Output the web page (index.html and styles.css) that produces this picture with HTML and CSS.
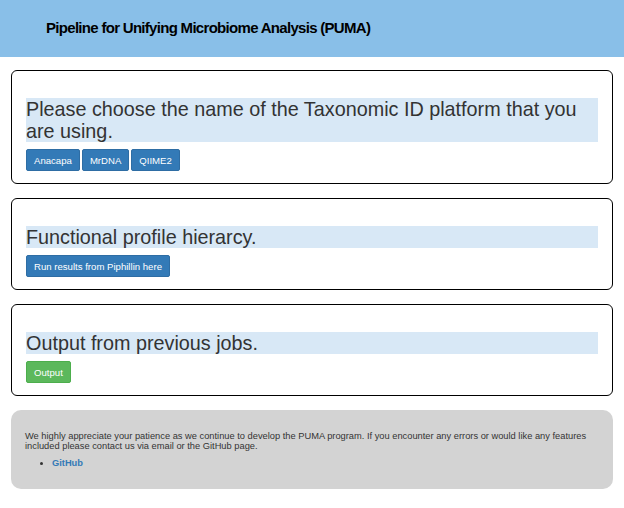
FILE: index.html
```html
<!DOCTYPE html>
<html>
<head>
<meta charset="utf-8">
<link rel="stylesheet" href="styles.css">
</head>
<body>
<header class="topbar">
  <h1 class="title">Pipeline for Unifying Microbiome Analysis (PUMA)</h1>
</header>
<main class="content">
  <section class="card">
    <h3 class="card-heading">Please choose the name of the Taxonomic ID platform that you are using.</h3>
    <div class="btn-row">
      <button class="btn btn-primary">Anacapa</button>
      <button class="btn btn-primary">MrDNA</button>
      <button class="btn btn-primary">QIIME2</button>
    </div>
  </section>
  <section class="card">
    <h3 class="card-heading">Functional profile hierarcy.</h3>
    <div class="btn-row">
      <button class="btn btn-primary">Run results from Piphillin here</button>
    </div>
  </section>
  <section class="card">
    <h3 class="card-heading">Output from previous jobs.</h3>
    <div class="btn-row">
      <button class="btn btn-success">Output</button>
    </div>
  </section>
  <footer class="note">
    <p class="note-text">We highly appreciate your patience as we continue to develop the PUMA program. If you encounter any errors or would like any features included please contact us via email or the GitHub page.</p>
    <ul class="note-links">
      <li><a href="#" class="note-link">GitHub</a></li>
    </ul>
  </footer>
</main>
</body>
</html>
```

FILE: styles.css
```css
* { box-sizing: border-box; }
html, body { margin: 0; padding: 0; background: #fff; }
body { font-family: "Liberation Sans", Arial, sans-serif; color: #333; }

.topbar {
  background: #89bfe8;
  height: 57px;
  display: flex;
  align-items: center;
  padding-left: 46px;
}
.title {
  margin: 0;
  font-size: 15px;
  font-weight: bold;
  color: #000;
  letter-spacing: -0.7px;
  padding-bottom: 3px;
}

.content {
  padding: 13px 11px 0;
  display: flex;
  flex-direction: column;
  gap: 14px;
}

.card {
  border: 1px solid #000;
  border-radius: 6px;
  padding: 27px 14px 12px;
}
.card-heading {
  margin: 0 0 7px;
  background: #d8e8f6;
  font-size: 19.8px;
  line-height: 22px;
  font-weight: normal;
  color: #333;
}

.btn-row { display: flex; gap: 2px; }
.btn {
  font-family: "Liberation Sans", Arial, sans-serif;
  font-size: 9.6px;
  font-weight: normal;
  color: #fff;
  height: 22px;
  padding: 0 7px;
  border-radius: 2px;
  border: 1px solid transparent;
  cursor: pointer;
}
.btn-primary { background: #337ab7; border-color: #2e6da4; }
.btn-success { background: #5cb85c; border-color: #4cae4c; }

.note {
  background: #d3d3d3;
  border-radius: 10px;
  padding: 21px 14px 21px;
  font-size: 9.3px;
  line-height: 10px;
  color: #333;
}
.note-text { margin: 0 0 7px; }
.note-links { margin: 0; padding-left: 27px; }
.note-link { color: #337ab7; font-weight: bold; text-decoration: none; }
```
